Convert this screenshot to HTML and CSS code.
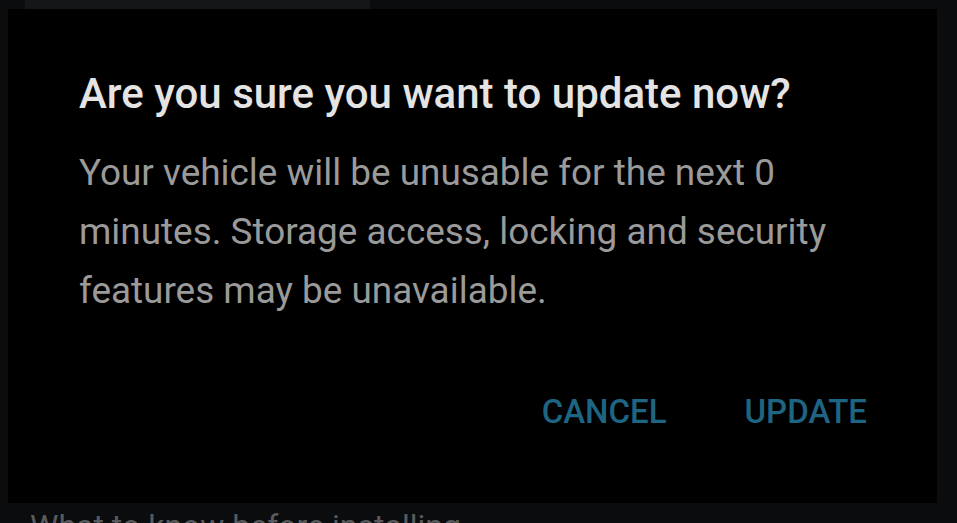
FILE: index.html
```html
<!DOCTYPE html>
<html lang="en">
<head>
<meta charset="utf-8">
<title>Update</title>
<link rel="stylesheet" href="styles.css">
</head>
<body>
<div class="screen">
  <div class="top-strip"></div>
  <div class="dialog">
    <h1 class="dialog-title">Are you sure you want to update now?</h1>
    <p class="dialog-body">Your vehicle will be unusable for the next 0 minutes. Storage access, locking and security features may be unavailable.</p>
    <div class="dialog-actions">
      <button class="btn">CANCEL</button>
      <button class="btn">UPDATE</button>
    </div>
  </div>
  <div class="below-text">What to know before installing</div>
</div>
</body>
</html>
```

FILE: styles.css
```css
html, body {
  margin: 0;
  padding: 0;
  background: #0b0c0e;
  height: 100%;
  overflow: hidden;
}

.screen {
  width: 957px;
  height: 523px;
  overflow: hidden;
  font-family: Roboto, "Liberation Sans", sans-serif;
  display: flex;
  flex-direction: column;
}

.top-strip {
  height: 9px;
  margin-left: 25px;
  width: 345px;
  background: #141618;
  flex: none;
}

.dialog {
  flex: none;
  margin-left: 8px;
  width: 929px;
  height: 494px;
  box-sizing: border-box;
  background: #000;
  padding: 61px 70px 0 71px;
  display: flex;
  flex-direction: column;
}

.dialog-title {
  margin: 0;
  font-size: 42px;
  line-height: 48px;
  font-weight: 500;
  color: #e4e4e4;
}

.dialog-body {
  margin: 25px 0 0 0;
  font-size: 36.9px;
  line-height: 59px;
  font-weight: 400;
  color: #9a9a9a;
  max-width: 770px;
}

.dialog-actions {
  margin-top: 72px;
  display: flex;
  justify-content: flex-end;
  gap: 78px;
}

.btn {
  background: none;
  border: none;
  padding: 0;
  font-family: inherit;
  font-size: 33px;
  line-height: 40px;
  font-weight: 500;
  color: #1d6582;
}

.below-text {
  margin: 3px 0 0 30px;
  font-size: 32px;
  line-height: 40px;
  color: #585a5c;
}
```
